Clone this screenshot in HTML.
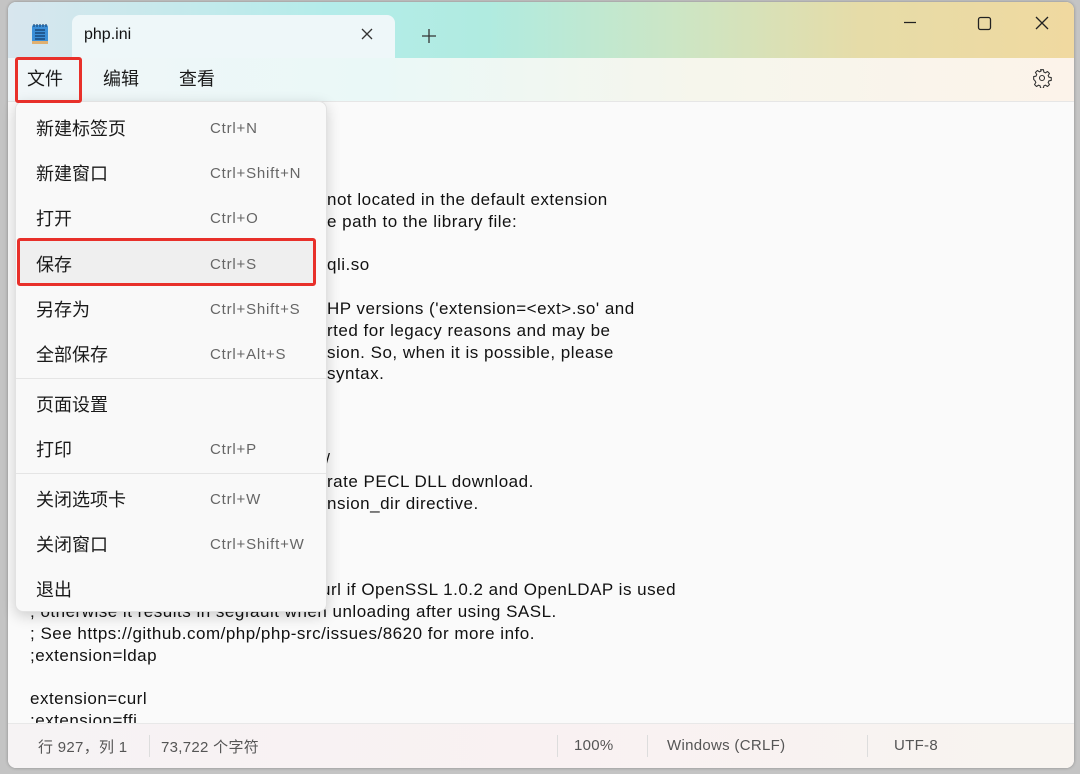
<!DOCTYPE html>
<html><head><meta charset="utf-8"><style>
*{margin:0;padding:0;box-sizing:border-box}
body{width:1080px;height:774px;overflow:hidden;background:#c4c4c4;position:relative;font-family:"Liberation Sans","Noto Sans CJK SC",sans-serif}
.win{position:absolute;left:8px;top:2px;width:1066px;height:766px;border-radius:8px;overflow:hidden;background:#fafafa;box-shadow:0 0 3px rgba(0,0,0,.3)}
.title{position:absolute;left:0;top:0;width:100%;height:56px;background:linear-gradient(90deg,#d8e6ee 0%,#b4ecea 30%,#b0ebe0 45%,#cbe6c6 62%,#e6dca8 80%,#f0d9a0 100%)}
.tab{position:absolute;left:64px;top:13px;width:323px;height:44px;background:#eef7f9;border-radius:8px 8px 0 0}
.menubar{position:absolute;left:0;top:56px;width:100%;height:44px;background:linear-gradient(90deg,#f0f6f8 0%,#eaf8f7 35%,#f6f6ec 65%,#fcf3ea 100%);border-bottom:1px solid #e6e6e6}
.t{position:absolute;white-space:pre;font-size:17px;letter-spacing:0.5px;color:#111;line-height:22px}
.menu{position:absolute;left:15px;top:101px;width:312px;height:511px;background:#f9f9f9;border-radius:8px;box-shadow:0 4px 14px rgba(0,0,0,.18);border:1px solid #e2e2e2;z-index:5}
.mi{position:absolute;left:20px;font-size:18px;color:#1a1a1a;line-height:24px}
.sc{position:absolute;left:194px;font-size:15px;letter-spacing:0.8px;color:#666;line-height:24px}
.sep{position:absolute;left:0;width:100%;height:1px;background:#e5e5e5}
.red{position:absolute;border:3px solid #e8302a;border-radius:3px;z-index:6}
.status{position:absolute;left:0;top:721px;width:100%;height:45px;background:linear-gradient(90deg,#f6f3f4,#f9f1f2 50%,#f8f4f0);border-top:1px solid #e8e8e8}
.st{position:absolute;top:13px;font-size:15px;color:#555;letter-spacing:0.3px}
.vs{position:absolute;top:11px;width:1px;height:22px;background:#ddd}
</style></head><body>
<div class="win">
 <div class="title"></div>
 <div class="tab"></div>
 <svg style="position:absolute;left:23px;top:20px" width="18" height="24" viewBox="0 0 18 24"><rect x="1" y="3" width="16" height="19" rx="2" fill="#3b8fd8"/><rect x="1" y="19" width="16" height="3" fill="#e0b070"/><path d="M4 8h10M4 11h10M4 14h10M4 17h10" stroke="#123a6a" stroke-width="1.2"/><path d="M3 2v3M6 2v3M9 2v3M12 2v3M15 2v3" stroke="#1b4a7a" stroke-width="1.2"/></svg>
 <div style="position:absolute;left:76px;top:24px;font-size:16px;color:#111">php.ini</div>
 <svg style="position:absolute;left:353px;top:26px" width="12" height="12"><path d="M1 1L11 11M11 1L1 11" stroke="#333" stroke-width="1.3"/></svg>
 <svg style="position:absolute;left:414px;top:27px" width="14" height="14"><path d="M7 0v14M0 7h14" stroke="#333" stroke-width="1.3"/></svg>
 <svg style="position:absolute;left:888px;top:14px" width="170" height="16"><path d="M8 6.5h12" stroke="#222" stroke-width="1.2"/><rect x="82.5" y="1.5" width="12" height="12" rx="2" fill="none" stroke="#222" stroke-width="1.3"/><path d="M140 1l12 12M152 1l-12 12" stroke="#222" stroke-width="1.3"/></svg>
 <div class="menubar"></div>
 <div style="position:absolute;left:19px;top:63px;font-size:18px;color:#1a1a1a">文件</div>
 <div style="position:absolute;left:95px;top:63px;font-size:18px;color:#1a1a1a">编辑</div>
 <div style="position:absolute;left:171px;top:63px;font-size:18px;color:#1a1a1a">查看</div>
 <svg style="position:absolute;left:1024px;top:66px" width="20" height="20" viewBox="0 0 24 24"><path d="M10.3 2h3.4l.5 2.8 2 1 2.4-1.6 2.4 2.4-1.6 2.4.9 2 2.8.5v3.4l-2.8.5-.9 2 1.6 2.4-2.4 2.4-2.4-1.6-2 .9-.5 2.8h-3.4l-.5-2.8-2-.9-2.4 1.6-2.4-2.4 1.6-2.4-.9-2L2 13.7v-3.4l2.8-.5.9-2-1.6-2.4 2.4-2.4 2.4 1.6 2-1z" fill="none" stroke="#333" stroke-width="1.3" stroke-linejoin="round"/><circle cx="12" cy="12" r="3" fill="none" stroke="#333" stroke-width="1.3"/></svg>

 <div class="t" style="left:319px;top:187px">not located in the default extension</div>
 <div class="t" style="left:319px;top:209px">e path to the library file:</div>
 <div class="t" style="left:319px;top:252px">qli.so</div>
 <div class="t" style="left:319px;top:296px">HP versions ('extension=&lt;ext&gt;.so' and</div>
 <div class="t" style="left:319px;top:318px">rted for legacy reasons and may be</div>
 <div class="t" style="left:319px;top:340px">sion. So, when it is possible, please</div>
 <div class="t" style="left:319px;top:361px">syntax.</div>
 <div class="t" style="left:312px;top:447px">t/</div>
 <div class="t" style="left:319px;top:469px">rate PECL DLL download.</div>
 <div class="t" style="left:319px;top:491px">nsion_dir directive.</div>
 <div class="t" style="left:313px;top:577px">url if OpenSSL 1.0.2 and OpenLDAP is used</div>
 <div class="t" style="left:22px;top:599px">; otherwise it results in segfault when unloading after using SASL.</div>
 <div class="t" style="left:22px;top:621px">; See https://github.com/php/php-src/issues/8620 for more info.</div>
 <div class="t" style="left:22px;top:643px">;extension=ldap</div>
 <div class="t" style="left:22px;top:686px">extension=curl</div>
 <div class="t" style="left:22px;top:708px">;extension=ffi</div>

 <div class="status">
  <div class="st" style="left:30px;top:12px">行 927，列 1</div>
  <div class="vs" style="left:141px"></div>
  <div class="st" style="left:153px;top:12px">73,722 个字符</div>
  <div class="vs" style="left:549px"></div>
  <div class="st" style="left:566px">100%</div>
  <div class="vs" style="left:639px"></div>
  <div class="st" style="left:659px">Windows (CRLF)</div>
  <div class="vs" style="left:859px"></div>
  <div class="st" style="left:886px">UTF-8</div>
 </div>
</div>

<div class="red" style="left:15px;top:57px;width:67px;height:46px"></div>
<div class="menu">
 <div style="position:absolute;left:2px;top:137px;width:298px;height:45px;background:#efefef;border-radius:4px"></div>
 <div class="mi" style="top:15px">新建标签页</div><div class="sc" style="top:15px">Ctrl+N</div>
 <div class="mi" style="top:60px">新建窗口</div><div class="sc" style="top:60px">Ctrl+Shift+N</div>
 <div class="mi" style="top:105px">打开</div><div class="sc" style="top:105px">Ctrl+O</div>
 <div class="mi" style="top:151px">保存</div><div class="sc" style="top:151px">Ctrl+S</div>
 <div class="mi" style="top:196px">另存为</div><div class="sc" style="top:196px">Ctrl+Shift+S</div>
 <div class="mi" style="top:241px">全部保存</div><div class="sc" style="top:241px">Ctrl+Alt+S</div>
 <div class="sep" style="top:276px"></div>
 <div class="mi" style="top:291px">页面设置</div>
 <div class="mi" style="top:336px">打印</div><div class="sc" style="top:336px">Ctrl+P</div>
 <div class="sep" style="top:371px"></div>
 <div class="mi" style="top:386px">关闭选项卡</div><div class="sc" style="top:386px">Ctrl+W</div>
 <div class="mi" style="top:431px">关闭窗口</div><div class="sc" style="top:431px">Ctrl+Shift+W</div>
 <div class="mi" style="top:476px">退出</div>
</div>
<div class="red" style="left:17px;top:238px;width:299px;height:48px"></div>
</body></html>
